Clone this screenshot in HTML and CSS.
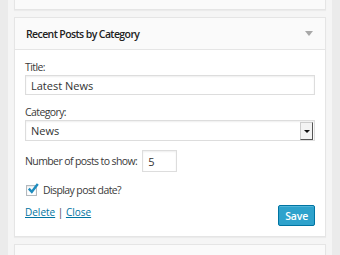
FILE: index.html
```html
<!DOCTYPE html>
<html lang="en">
<head>
<meta charset="utf-8">
<title>Widgets</title>
<link rel="stylesheet" href="styles.css">
</head>
<body>
<div class="sidebar">
	<div class="widget first">
		<div class="widget-top"></div>
	</div>

	<div class="widget">
		<div class="widget-top">
			<h3>Recent Posts by Category</h3>
			<span class="toggle"></span>
		</div>
		<div class="widget-inside">
			<div class="field">
				<label>Title:</label>
				<input class="text" type="text" value="Latest News">
			</div>
			<div class="field">
				<label>Category:</label>
				<div class="select">
					<span class="select-value">News</span>
					<span class="select-arrow"></span>
				</div>
			</div>
			<div class="field inline">
				<label>Number of posts to show:</label>
				<input class="small" type="text" value="5">
			</div>
			<div class="field check">
				<span class="checkbox">
					<svg width="12" height="12" viewBox="0 0 12 12"><path d="M1.8 5.6 L4.8 8.8 L10.8 1" fill="none" stroke="#1e8cbe" stroke-width="2.4"/></svg>
				</span>
				<label>Display post date?</label>
			</div>
			<div class="actions">
				<span class="links"><a href="#">Delete</a> | <a href="#">Close</a></span>
				<button class="save">Save</button>
			</div>
		</div>
	</div>

	<div class="widget">
		<div class="widget-top"></div>
	</div>
</div>
</body>
</html>
```

FILE: styles.css
```css
body {
	margin: 0;
	background-color: #ebebeb;
	font-family: "Open Sans", "Liberation Sans", sans-serif;
	font-size: 10.5px;
	letter-spacing: -0.6px;
	color: #3a3a3a;
	overflow: hidden;
}
.sidebar {
	margin: 0 8px;
	padding: 0 6px;
	height: 255px;
	background-color: #f5f5f5;
	display: flex;
	flex-direction: column;
	gap: 7px;
}
.widget {
	border: 1px solid #e5e5e5;
	background-color: #fafafa;
	box-shadow: 0 1px 1px rgba(0,0,0,0.04);
	flex-shrink: 0;
}
.widget.first {
	margin-top: -23px;
}
.widget-top {
	height: 31px;
	display: flex;
	align-items: center;
	justify-content: space-between;
	padding: 0 12px 0 11px;
}
.widget-top h3 {
	margin: 0;
	font-size: 10.5px;
	font-weight: 600;
	color: #222;
}
.toggle {
	width: 0;
	height: 0;
	border-left: 4px solid transparent;
	border-right: 4px solid transparent;
	border-top: 5px solid #a8a8a8;
}
.widget-inside {
	background-color: #fff;
	border-top: 1px solid #e5e5e5;
	padding: 9px 10px 10px;
}
.field {
	margin-bottom: 9px;
}
.field label {
	display: block;
	line-height: 16px;
}
input.text {
	display: block;
	width: 100%;
	height: 20px;
	box-sizing: border-box;
	border: 1px solid #ddd;
	box-shadow: inset 0 1px 2px rgba(0,0,0,0.07);
	font-family: inherit;
	font-size: 11px;
	letter-spacing: 0;
	color: #333;
	padding: 0 5px;
	margin: 0;
	outline: none;
}
.select {
	height: 21px;
	box-sizing: border-box;
	border: 1px solid #ddd;
	box-shadow: inset 0 1px 2px rgba(0,0,0,0.07);
	display: flex;
	align-items: center;
	justify-content: space-between;
	padding: 0 1px 0 5px;
	font-size: 11px;
	letter-spacing: 0;
	color: #333;
}
.select-arrow {
	width: 11px;
	height: 16px;
	border: 1px solid #ccc;
	border-right-color: #555;
	border-bottom-color: #555;
	background-color: #f3f3f3;
	position: relative;
}
.select-arrow::after {
	content: "";
	position: absolute;
	left: 3px;
	top: 7px;
	border-left: 3px solid transparent;
	border-right: 3px solid transparent;
	border-top: 3px solid #111;
}
.field.inline {
	display: flex;
	align-items: center;
	gap: 5px;
	margin-bottom: 10px;
}
input.small {
	width: 35px;
	height: 22px;
	box-sizing: border-box;
	border: 1px solid #ddd;
	box-shadow: inset 0 1px 2px rgba(0,0,0,0.07);
	font-family: inherit;
	font-size: 11px;
	letter-spacing: 0;
	color: #333;
	padding: 0 5px;
	margin: 0;
	outline: none;
}
.field.check {
	display: flex;
	align-items: center;
	gap: 6px;
	margin-bottom: 7px;
}
.checkbox {
	width: 11px;
	height: 11px;
	box-sizing: border-box;
	border: 1px solid #b4b9be;
	background-color: #fff;
	box-shadow: inset 0 1px 2px rgba(0,0,0,0.1);
	position: relative;
	margin-left: 1px;
}
.checkbox svg {
	position: absolute;
	left: 0;
	top: -3px;
}
.actions {
	display: flex;
	justify-content: space-between;
	align-items: flex-start;
}
.links {
	line-height: 14px;
	letter-spacing: 0;
	font-size: 10px;
}
.links a {
	color: #0074a2;
}
.save {
	height: 21px;
	padding: 0 6px;
	border: 1px solid #0074a2;
	border-radius: 2px;
	background-color: #2ea2cc;
	box-shadow: inset 0 1px 0 rgba(120,200,230,0.5);
	color: #fff;
	font-family: inherit;
	font-size: 10.5px;
	letter-spacing: -0.2px;
	font-weight: 600;
}
```
